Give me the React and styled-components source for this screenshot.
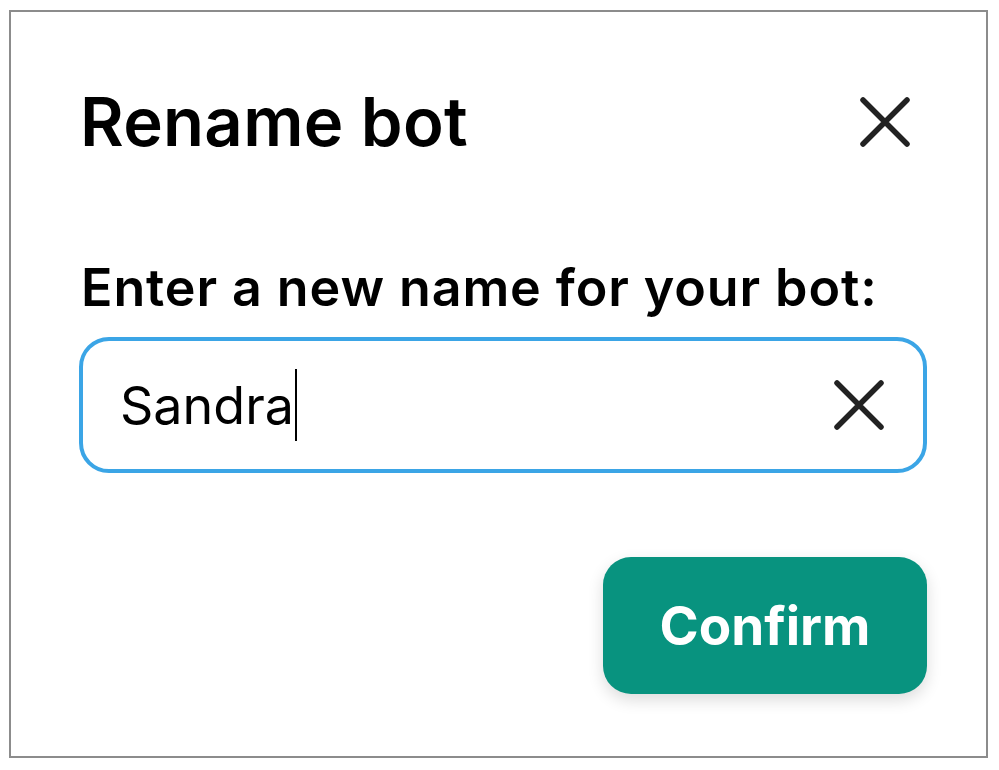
import styled, { createGlobalStyle } from "styled-components";

const GlobalStyle = createGlobalStyle`
  html, body {
    margin: 0;
    padding: 0;
    background: #ffffff;
  }
  body {
    font-family: Inter, "Liberation Sans", sans-serif;
    color: #000;
  }
`;

const Page = styled.div`
  padding: 10px 12px 0 9px;
`;

const Dialog = styled.div`
  box-sizing: border-box;
  width: 979px;
  height: 748px;
  border: 2px solid #8c8c8c;
  background: #fff;
  padding: 70px 59px 0 68px;
  display: flex;
  flex-direction: column;
`;

const Header = styled.div`
  display: flex;
  align-items: center;
  justify-content: space-between;
  height: 80px;
`;

const Title = styled.h1`
  margin: 0 0 0 1px;
  font-size: 67px;
  font-weight: 600;
  letter-spacing: 0.3px;
  line-height: 80px;
`;

const IconButton = styled.button`
  border: none;
  background: none;
  padding: 0;
  width: 50px;
  height: 50px;
  display: flex;
  align-items: center;
  justify-content: center;
  color: #222;
  margin-right: ${(p) => p.$right || 0}px;
  cursor: pointer;
`;

const Label = styled.label`
  display: block;
  margin: 94px 0 0 2px;
  font-size: 52px;
  font-weight: 600;
  letter-spacing: 0.9px;
  line-height: 64px;
`;

const Field = styled.div`
  box-sizing: border-box;
  margin-top: 17px;
  height: 136px;
  width: 848px;
  border: 4px solid #3ba5e6;
  border-radius: 30px;
  display: flex;
  align-items: center;
  justify-content: space-between;
  padding: 0 39px 0 37px;
`;

const Value = styled.span`
  font-size: 52px;
  font-weight: 400;
  display: flex;
  align-items: center;
`;

const Caret = styled.span`
  display: inline-block;
  width: 2px;
  height: 72px;
  background: #000;
  margin-left: 1px;
`;

const Footer = styled.div`
  display: flex;
  justify-content: flex-end;
  margin-top: 84px;
`;

const Confirm = styled.button`
  width: 324px;
  height: 137px;
  border: none;
  border-radius: 28px;
  background: #08937f;
  color: #fff;
  font-family: Inter, "Liberation Sans", sans-serif;
  font-size: 53px;
  font-weight: 700;
  box-shadow: 0 6px 16px rgba(0, 0, 0, 0.14);
  cursor: pointer;
`;

const XIcon = () => (
  <svg width="50" height="50" viewBox="0 0 50 50" fill="none">
    <path
      d="M3 3 L47 47 M47 3 L3 47"
      stroke="currentColor"
      strokeWidth="5.5"
      strokeLinecap="round"
    />
  </svg>
);

const App = () => {
  return (
    <Page>
      <GlobalStyle />
      <Dialog>
        <Header>
          <Title>Rename bot</Title>
          <IconButton $right={17} aria-label="Close">
            <XIcon />
          </IconButton>
        </Header>
        <Label>Enter a new name for your bot:</Label>
        <Field>
          <Value>
            Sandra
            <Caret />
          </Value>
          <IconButton aria-label="Clear">
            <XIcon />
          </IconButton>
        </Field>
        <Footer>
          <Confirm>Confirm</Confirm>
        </Footer>
      </Dialog>
    </Page>
  );
};

export default App;
